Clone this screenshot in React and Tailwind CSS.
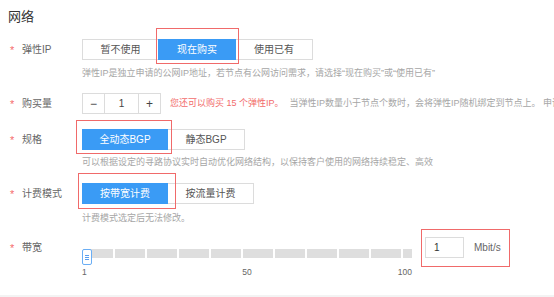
import React from 'react';

const Label = ({ children, className = '' }) => (
  <div className={`flex w-[82px] shrink-0 items-center pl-[10px] text-[10px] leading-[12px] text-[#666] ${className}`}>
    <span className="w-[12px] text-[11px] text-[#f56c6c]">*</span>
    <span>{children}</span>
  </div>
);

const Btn = ({ children, active, className = '' }) => (
  <div
    className={`flex h-[21px] items-center justify-center border text-[10px] ${
      active ? 'border-[#3a9bf5] bg-[#3a9bf5] text-white' : 'border-[#dcdcdc] bg-white text-[#555]'
    } ${className}`}
  >
    {children}
  </div>
);

const Help = ({ children, className = '' }) => (
  <div className={`pl-[82px] text-[9px] leading-[12px] text-[#a6a6a6] ${className}`}>{children}</div>
);

export default function App() {
  return (
    <div className="flex h-[297px] w-[554px] flex-col overflow-hidden bg-white font-['Liberation_Sans','Noto_Sans_CJK_SC',sans-serif]">
      {/* Title */}
      <div className="pl-[8px] pt-[8px] text-[13px] leading-[18px] text-[#333]">网络</div>

      {/* 弹性IP */}
      <div className="mt-[13px] flex items-center">
        <Label>弹性IP</Label>
        <div className="flex">
          <Btn className="w-[77px]">暂不使用</Btn>
          <div className="relative -ml-px">
            <Btn active className="w-[78px]">现在购买</Btn>
            <div className="absolute -bottom-[4px] -left-[2px] -right-[3px] -top-[11px] border-[1.5px] border-[#f06a6a]" />
          </div>
          <Btn className="-ml-px w-[78px]">使用已有</Btn>
        </div>
      </div>
      <Help className="mt-[7px]">弹性IP是独立申请的公网IP地址，若节点有公网访问需求，请选择“现在购买”或“使用已有”</Help>

      {/* 购买量 */}
      <div className="mt-[14px] flex items-center whitespace-nowrap">
        <Label>购买量</Label>
        <div className="flex h-[21px] border border-[#dcdcdc] text-[#444]">
          <div className="flex w-[21px] items-center justify-center text-[12px]">−</div>
          <div className="flex w-[35px] items-center justify-center border-x border-[#dcdcdc] text-[10px]">1</div>
          <div className="flex w-[21px] items-center justify-center text-[12px]">+</div>
        </div>
        <span className="ml-[9px] text-[9px] text-[#f26c6c]">您还可以购买 15 个弹性IP。</span>
        <span className="ml-[6px] text-[9px] text-[#a6a6a6]">当弹性IP数量小于节点个数时，会将弹性IP随机绑定到节点上。 申请更多</span>
      </div>

      {/* 规格 */}
      <div className="mt-[15px] flex items-center">
        <Label>规格</Label>
        <div className="flex">
          <div className="relative">
            <Btn active className="w-[86px]">全动态BGP</Btn>
            <div className="absolute -bottom-[4px] -left-[6px] -right-[4px] -top-[9px] border-[1.5px] border-[#f06a6a]" />
          </div>
          <Btn className="-ml-px w-[78px]">静态BGP</Btn>
        </div>
      </div>
      <Help className="mt-[6px]">可以根据设定的寻路协议实时自动优化网络结构，以保持客户使用的网络持续稳定、高效</Help>

      {/* 计费模式 */}
      <div className="mt-[15px] flex items-center">
        <Label>计费模式</Label>
        <div className="flex">
          <div className="relative">
            <Btn active className="w-[86px]">按带宽计费</Btn>
            <div className="absolute -bottom-[5px] -left-[4px] -right-[8px] -top-[10px] border-[1.5px] border-[#f06a6a]" />
          </div>
          <Btn className="-ml-px w-[87px]">按流量计费</Btn>
        </div>
      </div>
      <Help className="mt-[8px]">计费模式选定后无法修改。</Help>

      {/* 带宽 */}
      <div className="mt-[13px] flex items-start">
        <Label className="mt-[5px]">带宽</Label>
        <div className="mt-[9px] w-[330px]">
          <div className="relative h-[16px]">
            <div className="mt-[3px] flex h-[9px] gap-[2px] pl-px">
              {[0, 1, 2, 3, 4, 5, 6, 7, 8, 9].map((i) => (
                <div key={i} className="h-full w-[30px] bg-[#dedede]" />
              ))}
              <div className="h-full w-[9px] bg-[#dedede]" />
            </div>
            <div className="absolute left-0 top-0 flex h-[16px] w-[10px] flex-col items-center justify-center gap-[1px] rounded-[2px] border border-[#6aaef5] bg-white">
              <div className="h-px w-[4px] bg-[#5a9ff0]" />
              <div className="h-px w-[4px] bg-[#5a9ff0]" />
              <div className="h-px w-[4px] bg-[#5a9ff0]" />
            </div>
          </div>
          <div className="mt-[1px] grid grid-cols-3 text-[8.5px] leading-[12px] text-[#666]">
            <span className="text-left">1</span>
            <span className="text-center">50</span>
            <span className="text-right">100</span>
          </div>
        </div>
        <div className="relative ml-[13px] flex items-center">
          <div className="flex h-[21px] w-[39px] items-center border border-[#dcdcdc] pl-[8px] text-[10px] text-[#333]">1</div>
          <span className="ml-[10px] text-[10px] text-[#666]">Mbit/s</span>
          <div className="absolute -bottom-[9px] -left-[4px] -right-[9px] -top-[8px] border-[1.5px] border-[#f06a6a]" />
        </div>
      </div>

      <div className="mt-auto h-[2px] bg-[#f3f3f3]" />
    </div>
  );
}
